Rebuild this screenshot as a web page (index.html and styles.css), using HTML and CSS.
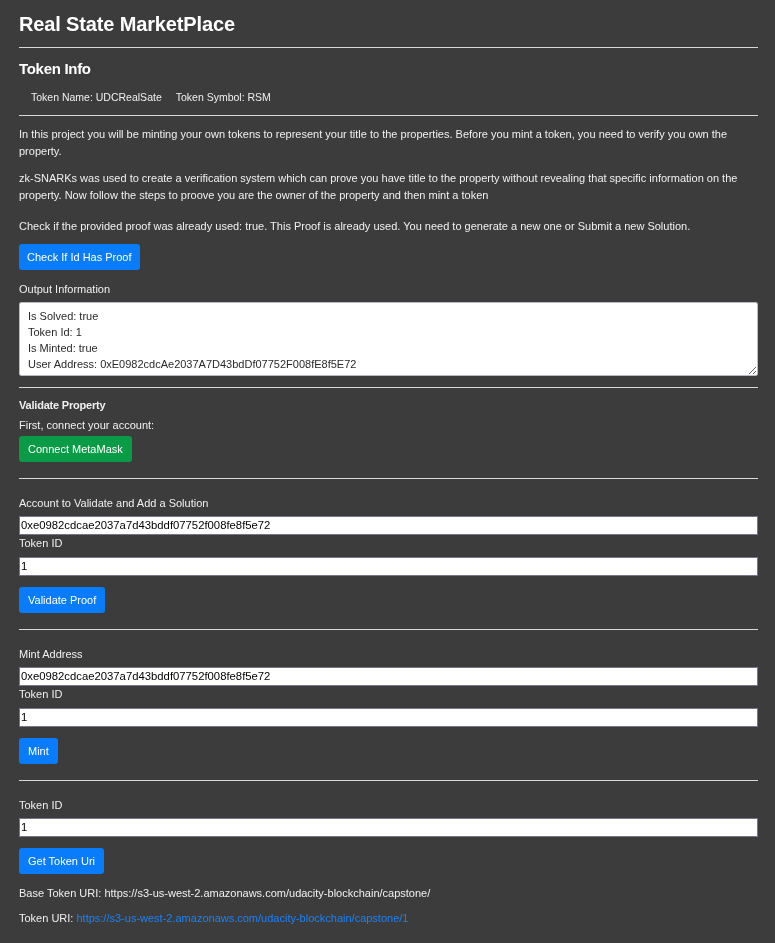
FILE: index.html
```html
<!DOCTYPE html>
<html>
<head>
<meta charset="utf-8">
<title>Real State MarketPlace</title>
<link rel="stylesheet" href="styles.css">
</head>
<body>
<div class="page">
  <h1 class="title">Real State MarketPlace</h1>
  <hr class="rule rule-title">
  <h2 class="subtitle">Token Info</h2>
  <div class="token-info">
    <span class="token-name">Token Name: UDCRealSate</span>
    <span class="token-symbol">Token Symbol: RSM</span>
  </div>
  <hr class="rule rule-info">

  <p class="intro intro-1">In this project you will be minting your own tokens to represent your title to the properties. Before you mint a token, you need to verify you own the property.</p>
  <p class="intro intro-2">zk-SNARKs was used to create a verification system which can prove you have title to the property without revealing that specific information on the property. Now follow the steps to proove you are the owner of the property and then mint a token</p>
  <p class="intro intro-3">Check if the provided proof was already used: true. This Proof is already used. You need to generate a new one or Submit a new Solution.</p>
  <button class="btn btn-blue btn-check">Check If Id Has Proof</button>
  <div class="label label-output">Output Information</div>
  <textarea class="output" readonly>Is Solved: true
Token Id: 1
Is Minted: true
User Address: 0xE0982cdcAe2037A7D43bdDf07752F008fE8f5E72</textarea>
  <hr class="rule rule-output">

  <section class="validate">
    <div class="label label-strong">Validate Property</div>
    <div class="label label-connect">First, connect your account:</div>
    <button class="btn btn-green btn-connect">Connect MetaMask</button>
  </section>
  <hr class="rule rule-section">

  <section class="form">
    <div class="label label-first">Account to Validate and Add a Solution</div>
    <input class="field field-first" type="text" value="0xe0982cdcae2037a7d43bddf07752f008fe8f5e72">
    <div class="label label-mid">Token ID</div>
    <input class="field field-second" type="text" value="1">
    <button class="btn btn-blue btn-form">Validate Proof</button>
  </section>
  <hr class="rule rule-section">

  <section class="form">
    <div class="label label-first">Mint Address</div>
    <input class="field field-first" type="text" value="0xe0982cdcae2037a7d43bddf07752f008fe8f5e72">
    <div class="label label-mid">Token ID</div>
    <input class="field field-second" type="text" value="1">
    <button class="btn btn-blue btn-form">Mint</button>
  </section>
  <hr class="rule rule-section">

  <section class="form">
    <div class="label label-first">Token ID</div>
    <input class="field field-first" type="text" value="1">
    <button class="btn btn-blue btn-form">Get Token Uri</button>
    <div class="label label-base">Base Token URI: https://s3-us-west-2.amazonaws.com/udacity-blockchain/capstone/</div>
    <div class="label label-uri">Token URI: <a class="uri-link" href="#">https://s3-us-west-2.amazonaws.com/udacity-blockchain/capstone/1</a></div>
  </section>
</div>
</body>
</html>
```

FILE: styles.css
```css
html, body {
  margin: 0;
  padding: 0;
  background: #3c3c3c;
}

body {
  font-family: "Liberation Sans", Arial, Helvetica, sans-serif;
  font-size: 11px;
  line-height: 16px;
  color: #f0f0f0;
}

.page {
  padding: 0 17px 20px 19px;
}

.title {
  margin: 0;
  padding-top: 12px;
  font-size: 20px;
  line-height: 24px;
  font-weight: 700;
  letter-spacing: -0.14px;
  color: #ffffff;
}

.rule {
  margin: 0;
  border: 0;
  height: 1px;
  background: #d8d8d8;
}

.rule-title { margin-top: 11px; }

.subtitle {
  margin: 11px 0 0;
  font-size: 15px;
  line-height: 20px;
  font-weight: 700;
  letter-spacing: -0.3px;
  color: #ffffff;
}

.token-info {
  margin-top: 10px;
  padding-left: 12px;
  display: flex;
  gap: 14px;
  font-size: 10.5px;
}

.rule-info { margin-top: 10px; }

.intro {
  margin: 0;
  line-height: 16.5px;
}

.intro-1 { margin-top: 10px; }
.intro-2 { margin-top: 11px; }
.intro-3 { margin-top: 15px; }

.btn {
  display: block;
  border: 0;
  border-radius: 3px;
  height: 26px;
  padding: 0 9px;
  font-family: "Liberation Sans", Arial, Helvetica, sans-serif;
  font-size: 11px;
  color: #ffffff;
  cursor: pointer;
}

.btn-blue { background: #087cfb; }
.btn-green { background: #0a9b46; }

.btn-check {
  margin-top: 9px;
  padding: 0 8px;
}

.label-output { margin-top: 11px; }

.output {
  display: block;
  box-sizing: border-box;
  width: 100%;
  height: 74px;
  margin-top: 5px;
  padding: 5px 8px;
  border: 1px solid #b8bcc2;
  border-radius: 2px;
  background: #ffffff;
  color: #2a2a2a;
  font-family: "Liberation Sans", Arial, Helvetica, sans-serif;
  font-size: 11px;
  line-height: 16px;
  resize: vertical;
}

.rule-output { margin-top: 11px; }

.label-strong {
  margin-top: 9px;
  font-weight: 700;
  letter-spacing: -0.2px;
}

.label-connect { margin-top: 4px; }

.btn-connect { margin-top: 3px; }

.rule-section { margin-top: 16px; }

.label-first { margin-top: 16px; }

.field {
  display: block;
  box-sizing: border-box;
  width: 100%;
  height: 19px;
  margin: 0;
  padding: 0 1px;
  border: 1px solid #76768a;
  background: #ffffff;
  color: #000000;
  font-family: "Liberation Sans", Arial, Helvetica, sans-serif;
  font-size: 11.3px;
}

.field-first { margin-top: 5px; }
.label-mid { margin-top: 0; }
.field-second { margin-top: 6px; }

.btn-form { margin-top: 11px; }

.label-base { margin-top: 11px; }
.label-uri { margin-top: 9px; }

.uri-link {
  color: #1a82f8;
  text-decoration: none;
}
```
